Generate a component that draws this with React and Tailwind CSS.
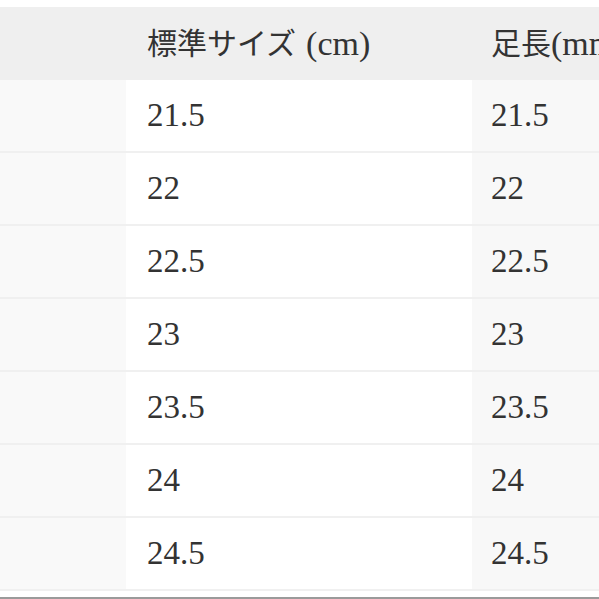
const rows = ["21.5", "22", "22.5", "23", "23.5", "24", "24.5"];

function Row({ value }) {
    return (
        <div className="grid grid-cols-[126px_346px_1fr] h-[73px] border-b-2 border-[#f0f0f0]">
            <div className="bg-[#f9f9f9]" />
            <div className="bg-white flex items-center pl-[21px]">{value}</div>
            <div className="bg-[#f8f8f8] flex items-center pl-[19px]">{value}</div>
        </div>
    );
}

export default function App() {
    return (
        <div
            className="w-[599px] h-[599px] overflow-hidden bg-white text-[#333] text-[33px] leading-none pt-[7px]"
            style={{ fontFamily: '"Liberation Serif", "Noto Sans CJK JP", serif' }}
        >
            <div className="grid grid-cols-[126px_346px_1fr] h-[73px] bg-[#efefef]">
                <div />
                <div className="flex items-center pl-[21px] text-[30px] whitespace-nowrap">
                    <span>標準サイズ</span>
                    <span className="text-[34px] ml-[10px]">(cm)</span>
                </div>
                <div className="flex items-center pl-[19px] text-[30px] whitespace-nowrap overflow-hidden">
                    <span>足長</span>
                    <span className="text-[34px]">(mm)</span>
                </div>
            </div>
            {rows.map((r) => (
                <Row key={r} value={r} />
            ))}
            <div className="h-[6px]" />
            <div className="h-[2px] bg-[#9a9a9a]" />
        </div>
    );
}
